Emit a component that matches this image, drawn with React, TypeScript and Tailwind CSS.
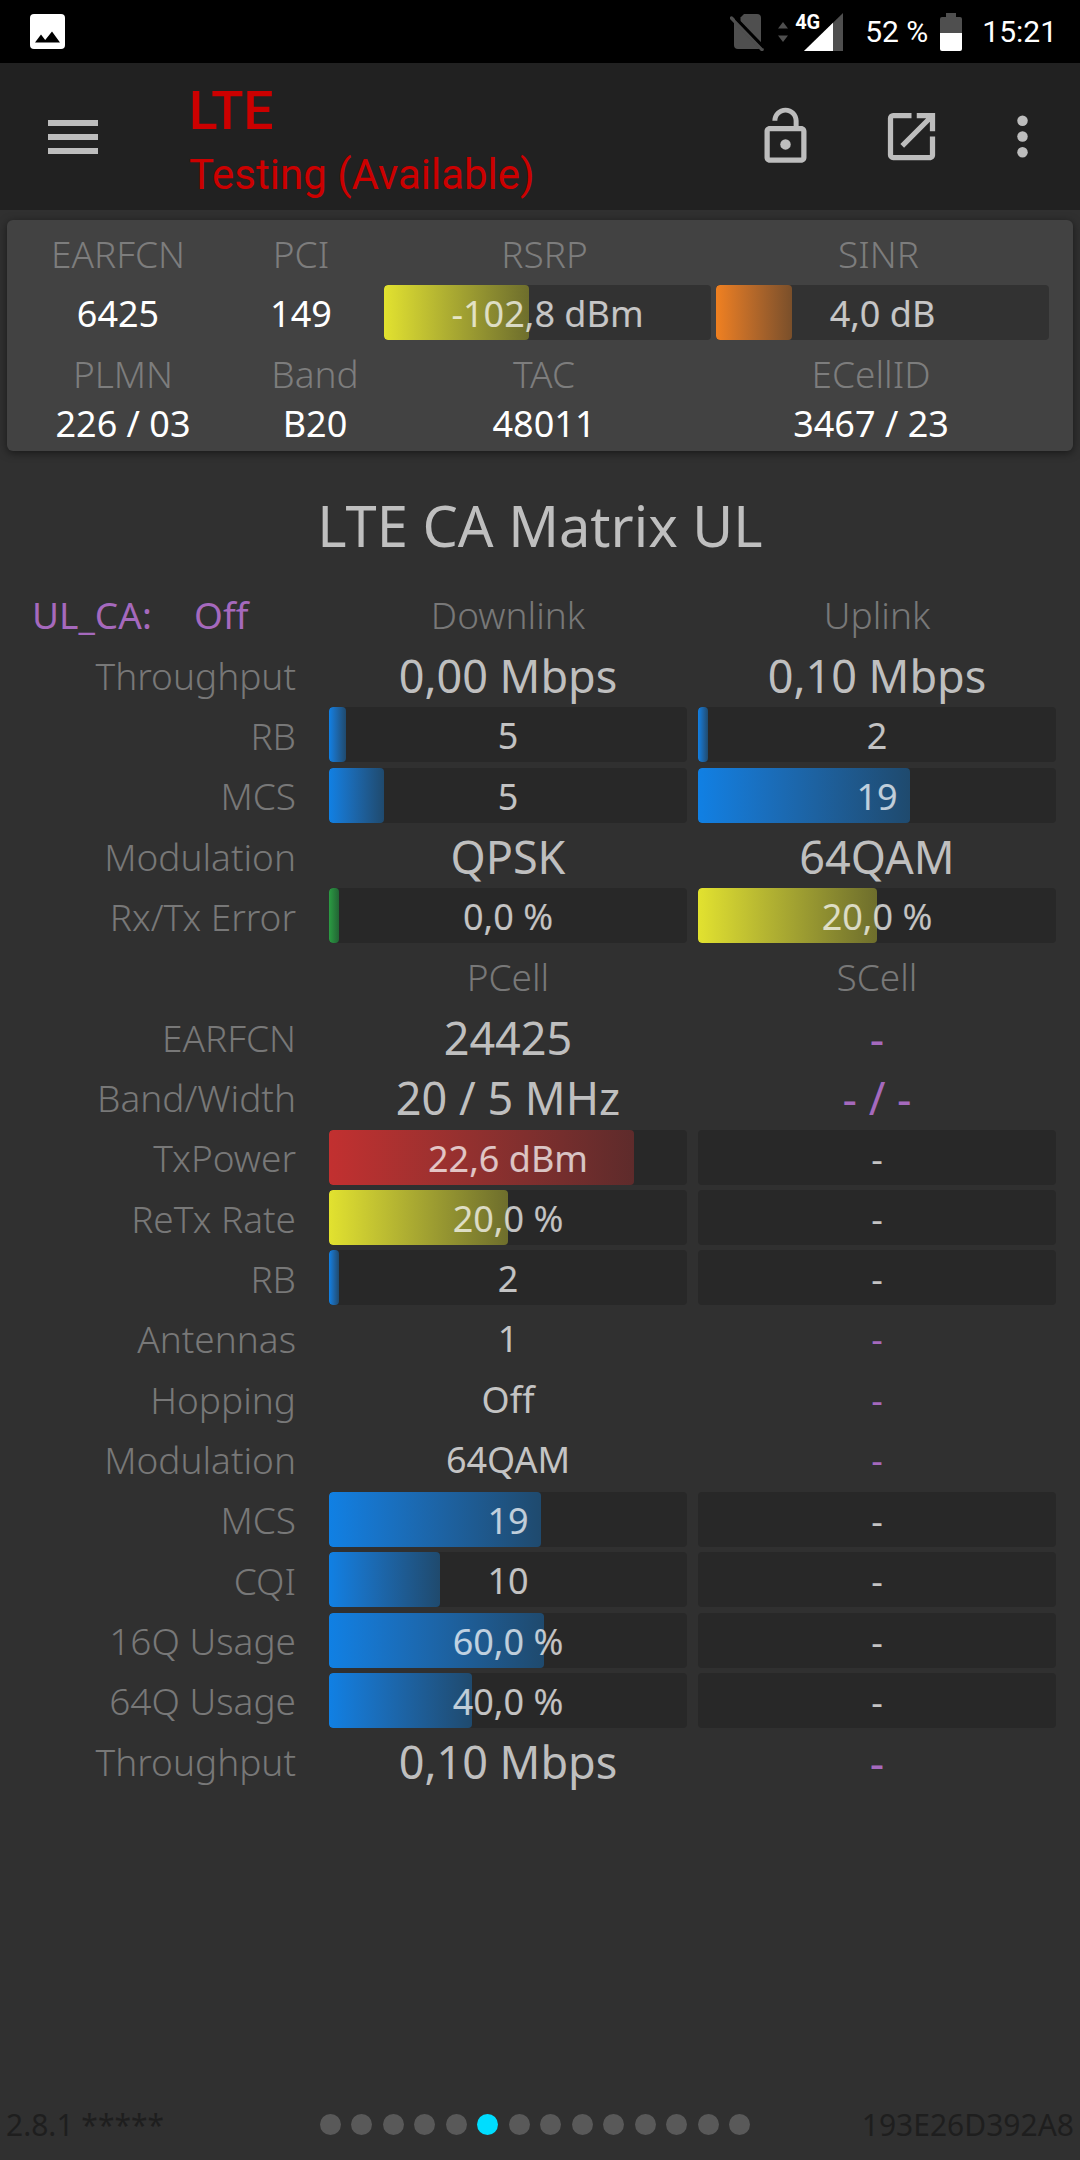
import type { ReactNode } from "react";

type Tone = "blue" | "green" | "yellow" | "orange" | "red";

const TONES: Record<Tone, string> = {
  blue: "bg-linear-to-r from-[#1080e4] to-[#1f4a6e]",
  green: "bg-linear-to-r from-[#2a9c42] to-[#226434]",
  yellow: "bg-linear-to-r from-[#e2e22f] to-[#6e6e2c]",
  orange: "bg-linear-to-r from-[#f08020] to-[#7a4f2a]",
  red: "bg-linear-to-r from-[#c23030] to-[#5e2b2b]",
};

type Bar = { kind: "bar"; text: string; fill?: number; tone?: Tone };
type Text = { kind: "big" | "value" | "none" | "noneBig"; text: string };
type CellData = Bar | Text;

const bar = (text: string, fill = 0, tone: Tone = "blue"): Bar => ({ kind: "bar", text, fill, tone });
const big = (text: string): Text => ({ kind: "big", text });
const value = (text: string): Text => ({ kind: "value", text });
const none = (text = "-"): Text => ({ kind: "none", text });
const noneBig = (text = "-"): Text => ({ kind: "noneBig", text });

const TEXT_STYLES: Record<Text["kind"], string> = {
  big: "text-[45px] text-[#bfbfbf]",
  value: "text-[36px] text-[#c4c4c4]",
  none: "text-[36px] text-[#a569bd]",
  noneBig: "text-[45px] text-[#a569bd]",
};

const TRANSFER_ROWS: [string, CellData, CellData][] = [
  ["Throughput", big("0,00 Mbps"), big("0,10 Mbps")],
  ["RB", bar("5", 4.8), bar("2", 2.8)],
  ["MCS", bar("5", 15.4), bar("19", 59.3)],
  ["Modulation", big("QPSK"), big("64QAM")],
  ["Rx/Tx Error", bar("0,0 %", 2.8, "green"), bar("20,0 %", 50, "yellow")],
];

const CELL_ROWS: [string, CellData, CellData][] = [
  ["EARFCN", big("24425"), noneBig()],
  ["Band/Width", big("20 / 5 MHz"), noneBig("- / -")],
  ["TxPower", bar("22,6 dBm", 85.3, "red"), bar("-")],
  ["ReTx Rate", bar("20,0 %", 50, "yellow"), bar("-")],
  ["RB", bar("2", 2.8), bar("-")],
  ["Antennas", value("1"), none()],
  ["Hopping", value("Off"), none()],
  ["Modulation", value("64QAM"), none()],
  ["MCS", bar("19", 59.3), bar("-")],
  ["CQI", bar("10", 31), bar("-")],
  ["16Q Usage", bar("60,0 %", 60), bar("-")],
  ["64Q Usage", bar("40,0 %", 40), bar("-")],
  ["Throughput", big("0,10 Mbps"), noneBig()],
];

function Meter({ text, fill = 0, tone = "blue", track }: { text: string; fill?: number; tone?: Tone; track: string }) {
  return (
    <div className={`relative flex h-[55px] justify-center overflow-hidden rounded-[4px] ${track}`}>
      {fill > 0 && (
        <div className={`absolute inset-y-0 left-0 rounded-[4px] ${TONES[tone]}`} style={{ width: `${fill}%` }} />
      )}
      <span className="relative text-[36px] leading-[57px] text-white/72">{text}</span>
    </div>
  );
}

function MatrixCell({ data }: { data: CellData }) {
  return (
    <td className="h-[60px] py-0 pr-[6px] pl-[5px] text-center align-middle">
      {data.kind === "bar" ? (
        <Meter text={data.text} fill={data.fill} tone={data.tone} track="bg-[#282828]" />
      ) : (
        <span className={`block pt-[2px] leading-[56px] ${TEXT_STYLES[data.kind]}`}>{data.text}</span>
      )}
    </td>
  );
}

function MatrixRow({ row }: { row: [string, CellData, CellData] }) {
  return (
    <tr>
      <th scope="row" className="h-[60px] pt-[2px] pr-7 pb-0 text-right align-middle text-[37px] leading-[56px] font-[350] text-[#787878]">
        {row[0]}
      </th>
      <MatrixCell data={row[1]} />
      <MatrixCell data={row[2]} />
    </tr>
  );
}

function ColumnHead({ children }: { children: ReactNode }) {
  return (
    <th scope="col" className="h-[60px] pt-[2px] pr-[6px] pb-0 pl-[5px] text-center align-middle text-[37px] leading-[56px] font-[350] text-[#787878]">
      {children}
    </th>
  );
}

function StatusBar() {
  return (
    <div className="flex h-[63px] items-center bg-black pr-[23px] pl-[30px] font-[Roboto,sans-serif] text-[30px] text-white">
      <svg className="h-[35px] w-[35px]" viewBox="0 0 35 35" aria-hidden="true">
        <rect width="35" height="35" rx="4" fill="#fff" />
        <path d="M5 28.500L11 20.500L15.200 26L22 17.500L30 28.500Z" fill="#000" />
      </svg>
      <svg className="ml-auto h-[38px] w-[34px]" viewBox="0 0 34 38" aria-hidden="true">
        <path d="M14 1H27Q31 1 31 5V31L10.500 8.500V4.500Z" fill="#4f4f4f" />
        <path d="M4 9L29.500 36H8Q4 36 4 32Z" fill="#4f4f4f" />
        <path d="M1.500 5L32 36.500" stroke="#4f4f4f" strokeWidth="3.500" strokeLinecap="round" />
        <path d="M6 5.500L34 34.500" stroke="#000" strokeWidth="3" />
      </svg>
      <svg className="ml-[14px] h-[20px] w-[10px]" viewBox="0 0 10 20" aria-hidden="true">
        <path d="M0 6.500L5 0L10 6.500ZM0 13.500L5 20L10 13.500Z" fill="#4f4f4f" />
      </svg>
      <div className="relative ml-[7px] h-[38px] w-[48px]">
        <svg className="h-[38px] w-[48px]" viewBox="0 0 48 38" aria-hidden="true">
          <path d="M48 0V38H9Z" fill="#4f4f4f" />
          <path d="M38 9.800V38H9Z" fill="#fff" />
        </svg>
        <span className="absolute top-0 left-0 text-[20px] leading-[18px] font-bold">4G</span>
      </div>
      <span className="ml-[22px]">52 %</span>
      <svg className="ml-[12px] h-[38px] w-[22px]" viewBox="0 0 22 38" aria-hidden="true">
        <path d="M6 0H16V4H20Q22 4 22 6V20H0V6Q0 4 2 4H6Z" fill="#4f4f4f" />
        <path d="M0 20H22V36Q22 38 20 38H2Q0 38 0 36Z" fill="#fff" />
      </svg>
      <span className="ml-[20px]">15:21</span>
    </div>
  );
}

function AppBar() {
  return (
    <header className="flex h-[147px] items-center bg-[#212121] pr-[26px] pl-[48px] text-[#bdbdbd]">
      <button type="button" aria-label="Open menu">
        <svg className="h-[34px] w-[50px]" viewBox="0 0 50 34" fill="currentColor" aria-hidden="true">
          <path d="M0 0H50V6H0ZM0 14H50V20H0ZM0 28H50V34H0Z" />
        </svg>
      </button>
      <div className="ml-[91px] flex-1 self-start pt-4 font-[Roboto,sans-serif] text-[#cc0000]">
        <div className="text-[53px] leading-[64px] font-medium">LTE</div>
        <div className="text-[42px] leading-[64px]">Testing (Available)</div>
      </div>
      <button type="button" aria-label="Unlock">
        <svg className="h-[63px] w-[63px]" viewBox="0 0 24 24" fill="currentColor" aria-hidden="true">
          <circle cx="12" cy="15" r="2" />
          <path d="M18 8h-1V6c0-2.760-2.240-5-5-5S7 3.240 7 6h1.900c0-1.710 1.390-3.100 3.100-3.100s3.100 1.390 3.100 3.100v2H6c-1.100 0-2 .9-2 2v10c0 1.100.9 2 2 2h12c1.100 0 2-.9 2-2V10c0-1.100-.9-2-2-2zm0 12H6V10h12v10z" />
        </svg>
      </button>
      <button type="button" aria-label="Open in new window" className="ml-[63px]">
        <svg className="h-[63px] w-[63px]" viewBox="0 0 24 24" fill="currentColor" aria-hidden="true">
          <path d="M19 19H5V5h7V3H5a2 2 0 0 0-2 2v14a2 2 0 0 0 2 2h14c1.100 0 2-.9 2-2v-7h-2v7zM14 3v2h3.590l-9.830 9.830 1.410 1.410L19 6.410V10h2V3h-7z" />
        </svg>
      </button>
      <button type="button" aria-label="More options" className="ml-12">
        <svg className="h-[63px] w-[63px]" viewBox="0 0 24 24" fill="currentColor" aria-hidden="true">
          <circle cx="12" cy="6" r="2" />
          <circle cx="12" cy="12" r="2" />
          <circle cx="12" cy="18" r="2" />
        </svg>
      </button>
    </header>
  );
}

function Summary() {
  return (
    <section className="mx-[7px] mt-[10px] rounded-[6px] bg-[#424242] pt-3 pr-6 pb-[1px] text-center text-[36px] shadow-[0_2px_8px_rgba(0,0,0,0.5)]">
      <div className="grid grid-cols-[222fr_144fr_343fr_333fr] text-[37px] leading-[44px] font-[350] text-[#7d7d7d]">
        <span>EARFCN</span>
        <span>PCI</span>
        <span>RSRP</span>
        <span className="pr-2">SINR</span>
      </div>
      <div className="mt-[9px] grid grid-cols-[222fr_144fr_343fr_333fr] leading-[57px] text-white">
        <span>6425</span>
        <span>149</span>
        <div className="pr-[5px] pl-[11px]">
          <Meter text="-102,8 dBm" fill={44.3} tone="yellow" track="bg-[#323232]" />
        </div>
        <Meter text="4,0 dB" fill={22.8} tone="orange" track="bg-[#323232]" />
      </div>
      <div className="mt-[10px] grid grid-cols-[232fr_152fr_306fr_352fr] text-[37px] leading-[44px] font-[350] text-[#7d7d7d]">
        <span>PLMN</span>
        <span>Band</span>
        <span>TAC</span>
        <span className="pr-1">ECellID</span>
      </div>
      <div className="mt-[2px] grid grid-cols-[232fr_152fr_306fr_352fr] leading-[52px] text-white">
        <span>226 / 03</span>
        <span>B20</span>
        <span>48011</span>
        <span className="pr-1">3467 / 23</span>
      </div>
    </section>
  );
}

function Matrix() {
  return (
    <div className="pr-[18px]">
      <table className="h-[1207px] w-full table-fixed border-collapse">
        <colgroup>
          <col className="w-[324px]" />
          <col />
          <col />
        </colgroup>
        <tbody>
          <tr>
            <th scope="col" className="h-[60px] pt-[2px] pb-0 pl-8 text-left align-middle text-[37px] leading-[56px] font-normal text-[#a569bd]">
              <span className="inline-block w-[162px]">UL_CA:</span>
              <span>Off</span>
            </th>
            <ColumnHead>Downlink</ColumnHead>
            <ColumnHead>Uplink</ColumnHead>
          </tr>
          {TRANSFER_ROWS.map((row) => (
            <MatrixRow key={row[0]} row={row} />
          ))}
          <tr>
            <td />
            <ColumnHead>PCell</ColumnHead>
            <ColumnHead>SCell</ColumnHead>
          </tr>
          {CELL_ROWS.map((row) => (
            <MatrixRow key={row[0]} row={row} />
          ))}
        </tbody>
      </table>
    </div>
  );
}

function Footer() {
  const pages = Array.from({ length: 14 }, (_, i) => i);
  return (
    <footer className="mt-auto grid h-[71px] grid-cols-[1fr_auto_1fr] items-center px-[6px] text-[30px] text-[#1e1e1e]">
      <span>2.8.1 *****</span>
      <nav aria-label="Pages" className="mr-[10px] flex w-[431px] justify-between">
        {pages.map((i) => (
          <button
            key={i}
            type="button"
            aria-label={`Page ${i + 1}`}
            aria-current={i === 5 ? "page" : undefined}
            className={`size-[21px] rounded-full ${i === 5 ? "bg-[#00ddff]" : "bg-[#595959]"}`}
          />
        ))}
      </nav>
      <span className="text-right">193E26D392A8</span>
    </footer>
  );
}

export default function App() {
  return (
    <div className="flex min-h-screen flex-col bg-[#303030] font-['Noto_Sans',sans-serif]">
      <StatusBar />
      <AppBar />
      <main>
        <Summary />
        <h1 className="pt-[38px] pb-[23px] text-center text-[56px] leading-[72px] text-[#bfbfbf]">LTE CA Matrix UL</h1>
        <Matrix />
      </main>
      <Footer />
    </div>
  );
}
